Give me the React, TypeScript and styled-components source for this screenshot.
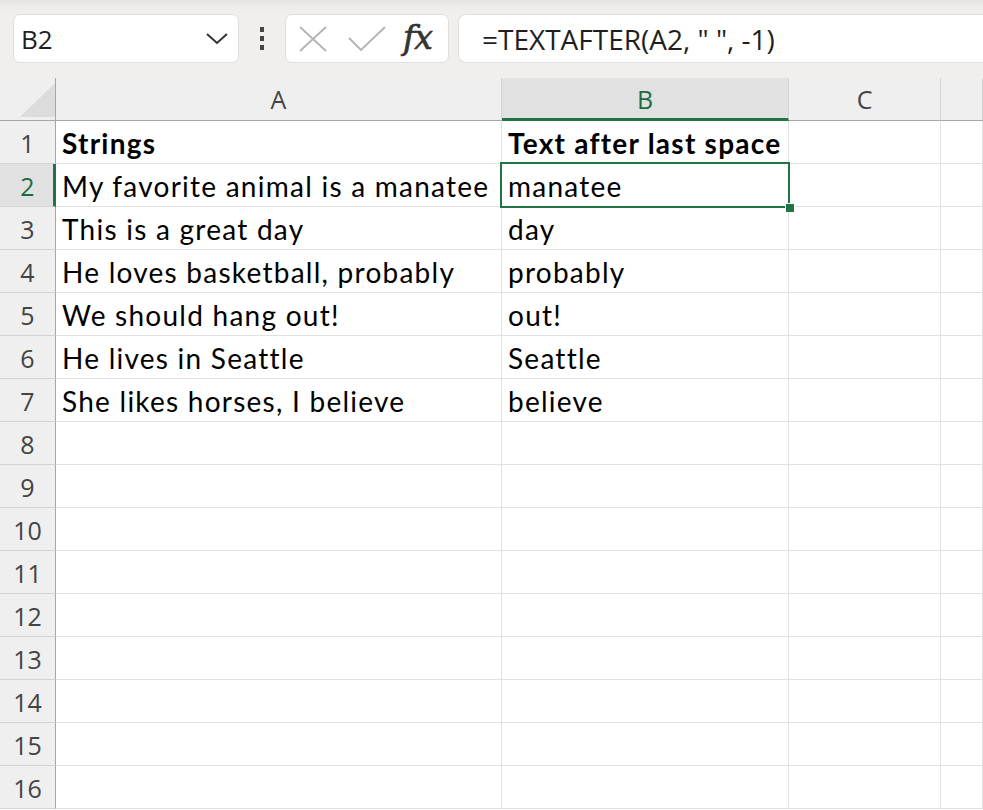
import React from "react";
import styled, { createGlobalStyle } from "styled-components";

const Global = createGlobalStyle`
  html, body { margin: 0; padding: 0; background: #ffffff; overflow: hidden; }
  body { font-family: "Lato", "Liberation Sans", sans-serif; }
  * { box-sizing: border-box; }
`;

const Page = styled.div`
  width: 983px;
  height: 810px;
  overflow: hidden;
  display: flex;
  flex-direction: column;
  background: #ffffff;
`;

const Toolbar = styled.div`
  height: 78px;
  flex: none;
  display: flex;
  align-items: flex-start;
  padding: 14px 0 0 13px;
  background: linear-gradient(#e6e3e1 0px, #eeebe9 6px, #f1efed 14px, #f1efed 100%);
`;

const NameBox = styled.div`
  width: 226px;
  height: 49px;
  background: #ffffff;
  border: 1px solid #e1dfdd;
  border-radius: 7px;
  display: flex;
  align-items: center;
  justify-content: space-between;
  padding: 0 9px 0 7px;
  font-family: "Open Sans", "Liberation Sans", sans-serif;
  font-size: 26px;
  color: #1f1f1f;
`;

const Dots = styled.div`
  width: 46px;
  height: 49px;
  display: flex;
  flex-direction: column;
  align-items: center;
  justify-content: center;
  gap: 4px;
  & > span {
    width: 4px;
    height: 5px;
    background: #444;
    display: block;
  }
`;

const FxBox = styled.div`
  width: 164px;
  height: 49px;
  background: #ffffff;
  border: 1px solid #e1dfdd;
  border-radius: 7px;
  display: flex;
  align-items: center;
  padding: 0 0 0 12px;
  gap: 20px;
`;

const FxText = styled.span`
  font-family: "DejaVu Serif", "Liberation Serif", serif;
  font-style: italic;
  font-size: 33px;
  letter-spacing: -1px;
  color: #333;
  -webkit-text-stroke: 0.7px #333;
  margin-left: -3px;
  line-height: 1;
  padding-bottom: 3px;
`;

const FormulaBox = styled.div`
  flex: 1;
  margin-left: 9px;
  height: 49px;
  background: #ffffff;
  border: 1px solid #e1dfdd;
  border-right: none;
  border-radius: 8px 0 0 8px;
  display: flex;
  align-items: center;
  padding-left: 23px;
  font-family: "Open Sans", "Liberation Sans", sans-serif;
  font-size: 28px;
  color: #1f1f1f;
`;

const Grid = styled.div`
  display: grid;
  grid-template-columns: 56px 446px 287px 152px 1fr;
  grid-auto-rows: 43px;
  flex: 1;
`;

const Corner = styled.div`
  background: #efefef;
  border-right: 1px solid #a6a6a6;
  border-bottom: 1px solid #a6a6a6;
  position: relative;
  &::after {
    content: "";
    position: absolute;
    right: 0px;
    bottom: 3px;
    width: 35px;
    height: 34px;
    background: #dcdcdc;
    clip-path: polygon(100% 0, 100% 100%, 0 100%);
  }
`;

const ColHead = styled.div<{ $active?: boolean }>`
  background: ${(p) => (p.$active ? "#e1e1e1" : "#efefef")};
  border-right: 1px solid #d4d4d4;
  border-bottom: ${(p) => (p.$active ? "3px solid #217346" : "1px solid #a6a6a6")};
  display: flex;
  align-items: center;
  justify-content: center;
  padding-top: ${(p) => (p.$active ? "2px" : "0px")};
  font-family: "Open Sans", "Liberation Sans", sans-serif;
  font-size: 25px;
  color: ${(p) => (p.$active ? "#1e6b43" : "#444444")};
`;

const RowHead = styled.div<{ $active?: boolean }>`
  background: ${(p) => (p.$active ? "#e1e1e1" : "#efefef")};
  border-right: ${(p) => (p.$active ? "3px solid #217346" : "1px solid #a6a6a6")};
  border-bottom: 1px solid #d4d4d4;
  display: flex;
  align-items: center;
  justify-content: center;
  padding-left: ${(p) => (p.$active ? "2px" : "0px")};
  padding-top: 2px;
  font-family: "Open Sans", "Liberation Sans", sans-serif;
  font-size: 25px;
  color: ${(p) => (p.$active ? "#1e6b43" : "#444444")};
`;

const Cell = styled.div<{ $bold?: boolean }>`
  border-right: 1px solid #e1e1e1;
  border-bottom: 1px solid #e1e1e1;
  display: flex;
  align-items: center;
  padding: 2px 0 0 6px;
  font-family: "Lato", "Liberation Sans", sans-serif;
  font-size: 28px;
  letter-spacing: 1.25px;
  font-weight: ${(p) => (p.$bold ? 700 : 400)};
  color: #000;
  white-space: nowrap;
  overflow: visible;
`;

const SelCell = styled(Cell)`
  position: relative;
  &::before {
    content: "";
    position: absolute;
    left: -2px;
    top: -2px;
    right: -2px;
    bottom: -2px;
    border: 2px solid #217346;
    pointer-events: none;
  }
  &::after {
    content: "";
    position: absolute;
    right: -6px;
    bottom: -6px;
    width: 8px;
    height: 8px;
    background: #217346;
    outline: 1px solid #ffffff;
  }
`;

const Icon = styled.svg`
  display: block;
  flex: none;
`;

const rows: [string, string][] = [
  ["Strings", "Text after last space"],
  ["My favorite animal is a manatee", "manatee"],
  ["This is a great day", "day"],
  ["He loves basketball, probably", "probably"],
  ["We should hang out!", "out!"],
  ["He lives in Seattle", "Seattle"],
  ["She likes horses, I believe", "believe"],
];

export default function App() {
  const all = Array.from({ length: 16 }, (_, i) => rows[i] ?? ["", ""]);
  return (
    <Page>
      <Global />
      <Toolbar>
        <NameBox>
          <span>B2</span>
          <Icon width="24" height="14" viewBox="0 0 24 14">
            <path d="M2 2 L12 11 L22 2" fill="none" stroke="#333" strokeWidth="2" />
          </Icon>
        </NameBox>
        <Dots>
          <span />
          <span />
          <span />
        </Dots>
        <FxBox>
          <Icon width="30" height="26" viewBox="0 0 30 26">
            <path d="M2 1 L28 25 M28 1 L2 25" fill="none" stroke="#b3b3b3" strokeWidth="1.8" />
          </Icon>
          <Icon width="38" height="26" viewBox="0 0 38 26">
            <path d="M1 12 L13 24 L37 1" fill="none" stroke="#b3b3b3" strokeWidth="1.8" />
          </Icon>
          <FxText>fx</FxText>
        </FxBox>
        <FormulaBox>=TEXTAFTER(A2, " ", -1)</FormulaBox>
      </Toolbar>
      <Grid>
        <Corner />
        <ColHead>A</ColHead>
        <ColHead $active>B</ColHead>
        <ColHead>C</ColHead>
        <ColHead />
        {all.map(([a, b], i) => (
          <React.Fragment key={i}>
            <RowHead $active={i === 1}>{i + 1}</RowHead>
            <Cell $bold={i === 0}>{a}</Cell>
            {i === 1 ? <SelCell>{b}</SelCell> : <Cell $bold={i === 0}>{b}</Cell>}
            <Cell />
            <Cell />
          </React.Fragment>
        ))}
      </Grid>
    </Page>
  );
}
